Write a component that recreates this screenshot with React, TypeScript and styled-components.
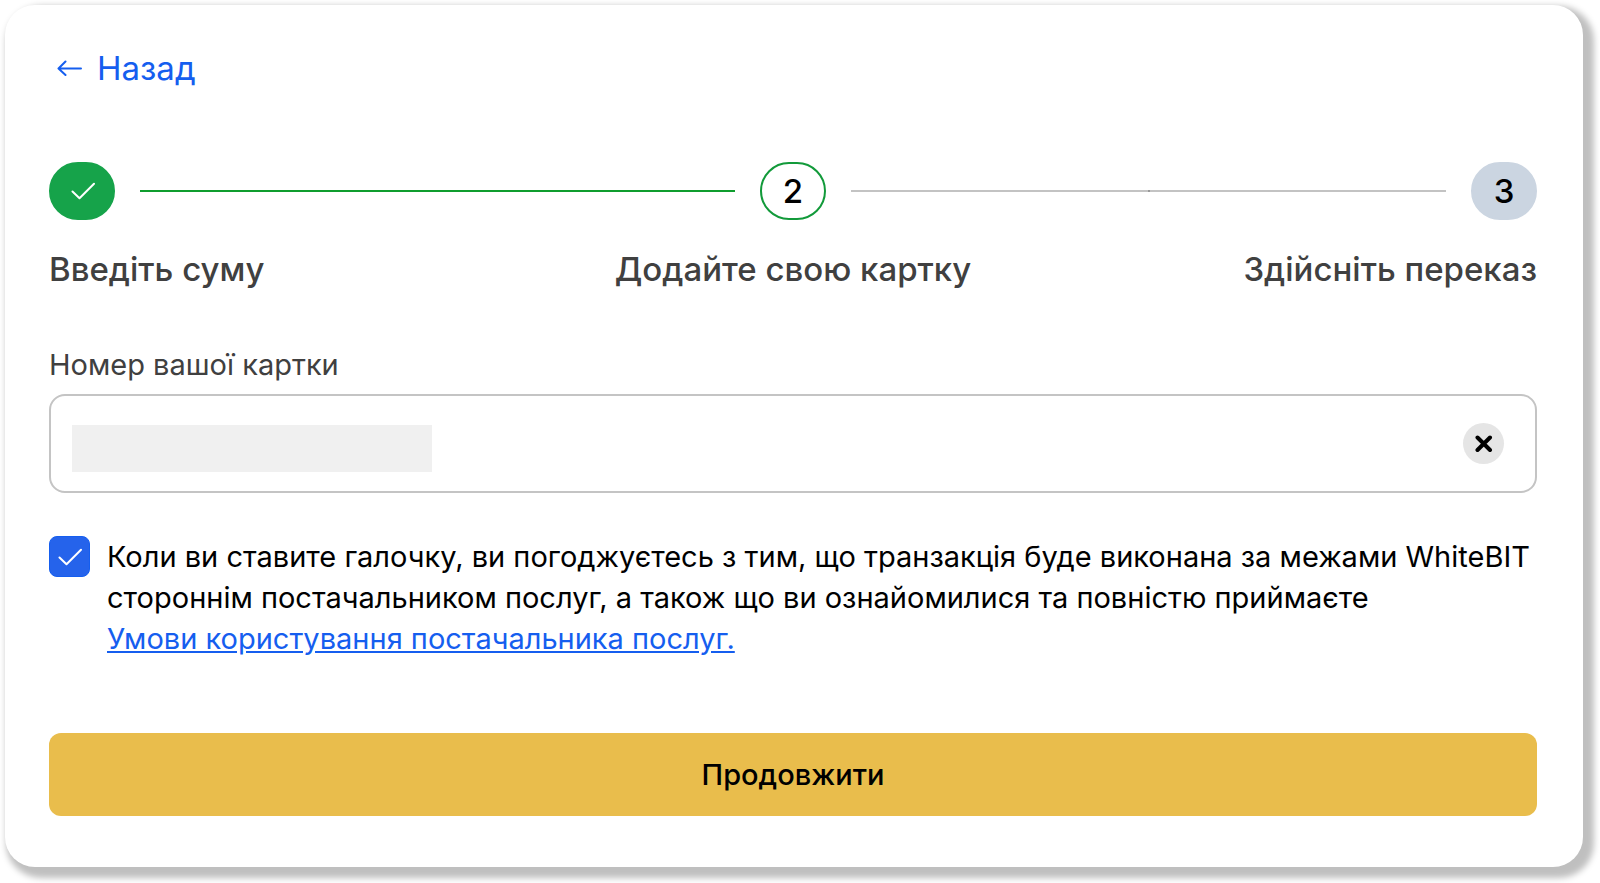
import { useState } from "react";
import styled, { createGlobalStyle } from "styled-components";

const GlobalStyle = createGlobalStyle`
  *, *::before, *::after { box-sizing: border-box; }
  body {
    margin: 0;
    background: #fff;
    color: #000;
    font-family: Inter, "Liberation Sans", sans-serif;
    -webkit-font-smoothing: antialiased;
  }
`;

const Page = styled.div`
  padding: 5px 17px 17px 5px;
`;

const Card = styled.form`
  display: flex;
  flex-direction: column;
  align-items: stretch;
  padding: 43px 46px 51px 44px;
  border-radius: 30px;
  background: #fff;
  box-shadow: 6px 6px 6px 5px rgba(0, 0, 0, 0.25);
`;

const BackLink = styled.a`
  display: flex;
  align-items: center;
  align-self: flex-start;
  gap: 14px;
  padding-left: 8px;
  margin-bottom: 74px;
  font-size: 33px;
  line-height: 40px;
  color: #155eef;
  text-decoration: none;
`;

const Track = styled.div`
  display: flex;
  align-items: center;
  gap: 25px;
`;

type StepState = "done" | "current" | "next";

const pillFill = { done: "#16a34a", current: "#fff", next: "#cbd5e1" };
const pillEdge = { done: "#16a34a", current: "#129a3a", next: "#cbd5e1" };

const Pill = styled.span<{ $state: StepState }>`
  display: flex;
  align-items: center;
  justify-content: center;
  flex: none;
  width: 66px;
  height: 58px;
  padding-bottom: 1px;
  border: 2px solid ${(p) => pillEdge[p.$state]};
  border-radius: 29px;
  background: ${(p) => pillFill[p.$state]};
  font-size: 33px;
  font-weight: 500;
`;

const Line = styled.span<{ $done?: boolean }>`
  display: flex;
  justify-content: center;
  flex: 1;
  height: 2px;
  background: ${(p) => (p.$done ? "#0f9d2e" : "#c3c3c3")};

  &::before {
    content: "";
    width: 2px;
    background: ${(p) => (p.$done ? "transparent" : "#999")};
  }
`;

const Labels = styled.div`
  display: grid;
  grid-template-columns: 1fr auto 1fr;
  margin-top: 29px;
  font-size: 33px;
  font-weight: 500;
  line-height: 40px;
  color: #404040;

  span:last-child { text-align: right; }
`;

const FieldLabel = styled.label`
  margin-top: 56px;
  font-size: 29px;
  line-height: 40px;
  color: #404040;
`;

const Field = styled.div`
  display: flex;
  align-items: center;
  height: 99px;
  margin-top: 9px;
  padding: 0 31px 0 21px;
  border: 2px solid #c4c4c4;
  border-radius: 16px;
`;

const Redacted = styled.span`
  width: 360px;
  height: 47px;
  margin-top: 10px;
  background: #f0f0f0;
`;

const CardInput = styled.input`
  flex: 1;
  min-width: 0;
  height: 60px;
  border: 0;
  outline: 0;
  background: transparent;
  font: inherit;
  font-size: 29px;
`;

const ClearButton = styled.button`
  display: flex;
  align-items: center;
  justify-content: center;
  width: 41px;
  height: 41px;
  padding: 0;
  border: 0;
  border-radius: 50%;
  background: #e5e5e5;
  color: #000;
  cursor: pointer;
`;

const Consent = styled.div`
  display: flex;
  align-items: flex-start;
  gap: 17px;
  margin-top: 43px;
`;

const TickBox = styled.span`
  display: grid;
  flex: none;
  width: 41px;
  height: 41px;

  > * { grid-area: 1 / 1; place-self: center; }
  svg { pointer-events: none; }
`;

const Tick = styled.input`
  appearance: none;
  width: 41px;
  height: 41px;
  margin: 0;
  border: 1px solid #155eef;
  border-radius: 8px;
  background: #fff;
  cursor: pointer;

  &:checked { background: #2563eb; }
`;

const ConsentText = styled.div`
  font-size: 29px;
  line-height: 41px;
`;

const TermsLink = styled.a`
  display: table;
  color: #155eef;
  text-decoration: underline;
`;

const Submit = styled.button`
  height: 83px;
  margin-top: 74px;
  padding: 0 0 1px;
  border: 0;
  border-radius: 12px;
  background: #e9bd4c;
  color: #000;
  font: inherit;
  font-size: 29px;
  font-weight: 500;
  cursor: pointer;
`;

const CheckIcon = () => (
  <svg width="25" height="18" viewBox="0 0 25 18" fill="none" stroke="#fff" strokeWidth="2" strokeLinecap="round" strokeLinejoin="round" aria-hidden="true">
    <path d="M2.5 9.5 9.5 16.2 24 1.8" />
  </svg>
);

const ArrowIcon = () => (
  <svg width="26" height="16" viewBox="0 0 26 16" fill="none" stroke="currentColor" strokeWidth="2" strokeLinecap="round" strokeLinejoin="round" aria-hidden="true">
    <path d="M24 8.5H2M8.5 1.5 1.5 8.5l7 6.5" />
  </svg>
);

const CrossIcon = () => (
  <svg width="18" height="18" viewBox="0 0 18 18" fill="none" stroke="currentColor" strokeWidth="4" strokeLinecap="round" aria-hidden="true">
    <path d="M2.5 2.5l12.5 12.5M15 2.5 2.5 15" />
  </svg>
);

export default function App() {
  const [number, setNumber] = useState("");
  const [agreed, setAgreed] = useState(true);

  return (
    <>
      <GlobalStyle />
      <Page>
        <Card onSubmit={(e) => e.preventDefault()}>
          <BackLink href="#back">
            <ArrowIcon />
            Назад
          </BackLink>

          <Track>
            <Pill $state="done"><CheckIcon /></Pill>
            <Line $done />
            <Pill $state="current">2</Pill>
            <Line />
            <Pill $state="next">3</Pill>
          </Track>
          <Labels>
            <span>Введіть суму</span>
            <span>Додайте свою картку</span>
            <span>Здійсніть переказ</span>
          </Labels>

          <FieldLabel htmlFor="card">Номер вашої картки</FieldLabel>
          <Field>
            <Redacted />
            <CardInput id="card" inputMode="numeric" value={number} onChange={(e) => setNumber(e.target.value)} />
            <ClearButton type="button" aria-label="Очистити" onClick={() => setNumber("")}>
              <CrossIcon />
            </ClearButton>
          </Field>

          <Consent>
            <TickBox>
              <Tick id="agree" type="checkbox" checked={agreed} onChange={(e) => setAgreed(e.target.checked)} />
              {agreed && <CheckIcon />}
            </TickBox>
            <ConsentText>
              <label htmlFor="agree">
                Коли ви ставите галочку, ви погоджуєтесь з тим, що транзакція буде виконана за межами WhiteBIT
                стороннім постачальником послуг, а також що ви ознайомилися та повністю приймаєте
              </label>
              <TermsLink href="#terms">Умови користування постачальника послуг.</TermsLink>
            </ConsentText>
          </Consent>

          <Submit type="submit">Продовжити</Submit>
        </Card>
      </Page>
    </>
  );
}
